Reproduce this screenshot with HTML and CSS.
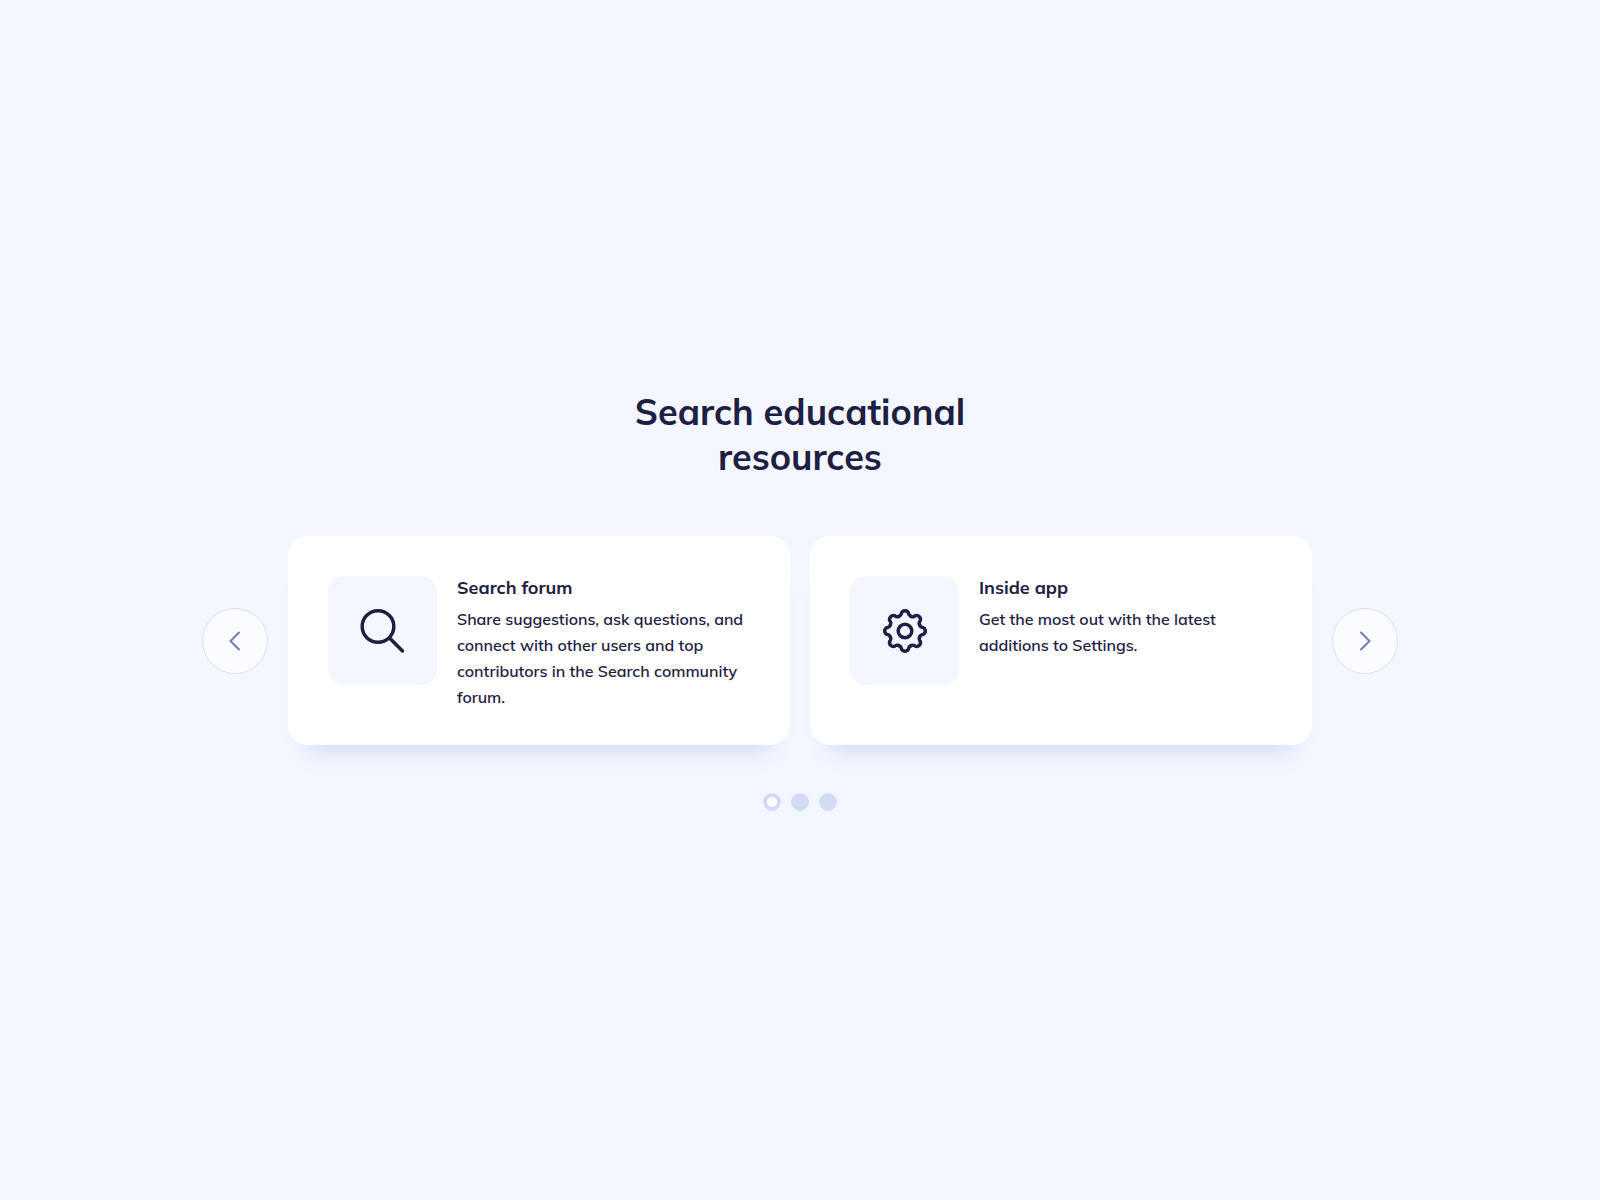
FILE: index.html
```html
<!DOCTYPE html>
<html lang="en">
<head>
<meta charset="utf-8">
<meta name="viewport" content="width=device-width, initial-scale=1">
<title>Search educational resources</title>
<link rel="stylesheet" href="styles.css">
</head>
<body>
<main class="resources">
  <h1 class="resources-title">Search educational resources</h1>
  <div class="carousel">
    <button class="arrow" type="button" aria-label="Previous">
      <svg class="arrow-icon" viewBox="0 0 24 24" aria-hidden="true"><path d="M16 3.500l-8.500 8.500 8.500 8.500"/></svg>
    </button>
    <div class="cards">
      <article class="card">
        <div class="card-media">
          <svg class="card-icon" viewBox="0 0 44 44" stroke-width="3.500" aria-hidden="true">
            <circle cx="17" cy="17.500" r="15.800"/>
            <path d="M28.500 29L41.500 42"/>
          </svg>
        </div>
        <div class="card-body">
          <h2 class="card-title">Search forum</h2>
          <p class="card-text">Share suggestions, ask questions, and connect with other users and top contributors in the Search community forum.</p>
        </div>
      </article>
      <article class="card">
        <div class="card-media">
          <svg class="card-icon" viewBox="-22 -22 44 44" stroke-width="3.500" aria-hidden="true">
            <defs>
              <path id="tooth" d="M-6.050 -14.600C-4.900 -15.060 -3.900 -15.500 -3.800 -16.800A3.800 3.500 0 0 1 3.800 -16.800C3.900 -15.500 4.900 -15.060 6.050 -14.600"/>
            </defs>
            <use href="#tooth"/>
            <use href="#tooth" transform="rotate(45)"/>
            <use href="#tooth" transform="rotate(90)"/>
            <use href="#tooth" transform="rotate(135)"/>
            <use href="#tooth" transform="rotate(180)"/>
            <use href="#tooth" transform="rotate(225)"/>
            <use href="#tooth" transform="rotate(270)"/>
            <use href="#tooth" transform="rotate(315)"/>
            <circle r="6.800"/>
          </svg>
        </div>
        <div class="card-body">
          <h2 class="card-title">Inside app</h2>
          <p class="card-text">Get the most out with the latest additions to Settings.</p>
        </div>
      </article>
    </div>
    <button class="arrow" type="button" aria-label="Next">
      <svg class="arrow-icon" viewBox="0 0 24 24" aria-hidden="true"><path d="M8 3.500l8.500 8.500-8.500 8.500"/></svg>
    </button>
  </div>
  <nav class="dots" aria-label="Slides">
    <button class="dot dot-active" type="button" aria-label="Slide 1" aria-current="true"></button>
    <button class="dot" type="button" aria-label="Slide 2"></button>
    <button class="dot" type="button" aria-label="Slide 3"></button>
  </nav>
</main>
</body>
</html>
```
FILE: styles.css
```css
*,
*::before,
*::after {
  box-sizing: border-box;
}

body {
  margin: 0;
  background: #f4f7ff;
  color: #1e2043;
  font-family: Mulish, Muli, Lato, "Open Sans", sans-serif;
}

.resources {
  display: flex;
  flex-direction: column;
  align-items: center;
  justify-content: center;
  min-height: 100vh;
  padding: 40px 20px;
}

.resources-title {
  max-width: 400px;
  margin: 0 0 57px;
  font-size: 36px;
  font-weight: 700;
  line-height: 45px;
  text-align: center;
}

.carousel {
  display: flex;
  align-items: center;
  gap: 20px;
  width: 100%;
  max-width: 1196px;
}

.arrow {
  display: flex;
  flex: none;
  align-items: center;
  justify-content: center;
  width: 66px;
  height: 66px;
  padding: 0;
  border: 1px solid #dddff3;
  border-radius: 50%;
  background: #fafcff;
  cursor: pointer;
}

.arrow-icon {
  width: 24px;
  height: 24px;
  fill: none;
  stroke: #7878ae;
  stroke-width: 2;
  stroke-linecap: round;
  stroke-linejoin: round;
}

.cards {
  display: grid;
  flex: 1;
  grid-template-columns: repeat(auto-fit, minmax(360px, 1fr));
  gap: 20px;
}

.card {
  display: flex;
  align-items: flex-start;
  gap: 20px;
  padding: 40px 40px 35px;
  border-radius: 20px;
  background: #fff;
  box-shadow: 0 24px 24px -20px #ccd5ef;
}

.card-media {
  display: flex;
  flex: none;
  align-items: center;
  justify-content: center;
  width: 109px;
  height: 109px;
  border-radius: 16px;
  background: #f4f7ff;
}

.card-icon {
  width: 44px;
  height: 44px;
  overflow: visible;
  fill: none;
  stroke: #1e2043;
  stroke-linecap: round;
}

.card-body {
  flex: 1;
}

.card-title {
  margin: 0 0 6px;
  font-size: 18px;
  font-weight: 700;
  line-height: 24px;
}

.card-text {
  margin: 0;
  font-size: 16px;
  font-weight: 600;
  line-height: 26px;
}

.dots {
  display: flex;
  gap: 10px;
  margin-top: 48px;
}

.dot {
  width: 18px;
  height: 18px;
  padding: 0;
  border: 4px solid #d4dcf5;
  border-radius: 50%;
  background: #d4dcf5;
  cursor: pointer;
}

.dot-active {
  background: #fff;
}
```
